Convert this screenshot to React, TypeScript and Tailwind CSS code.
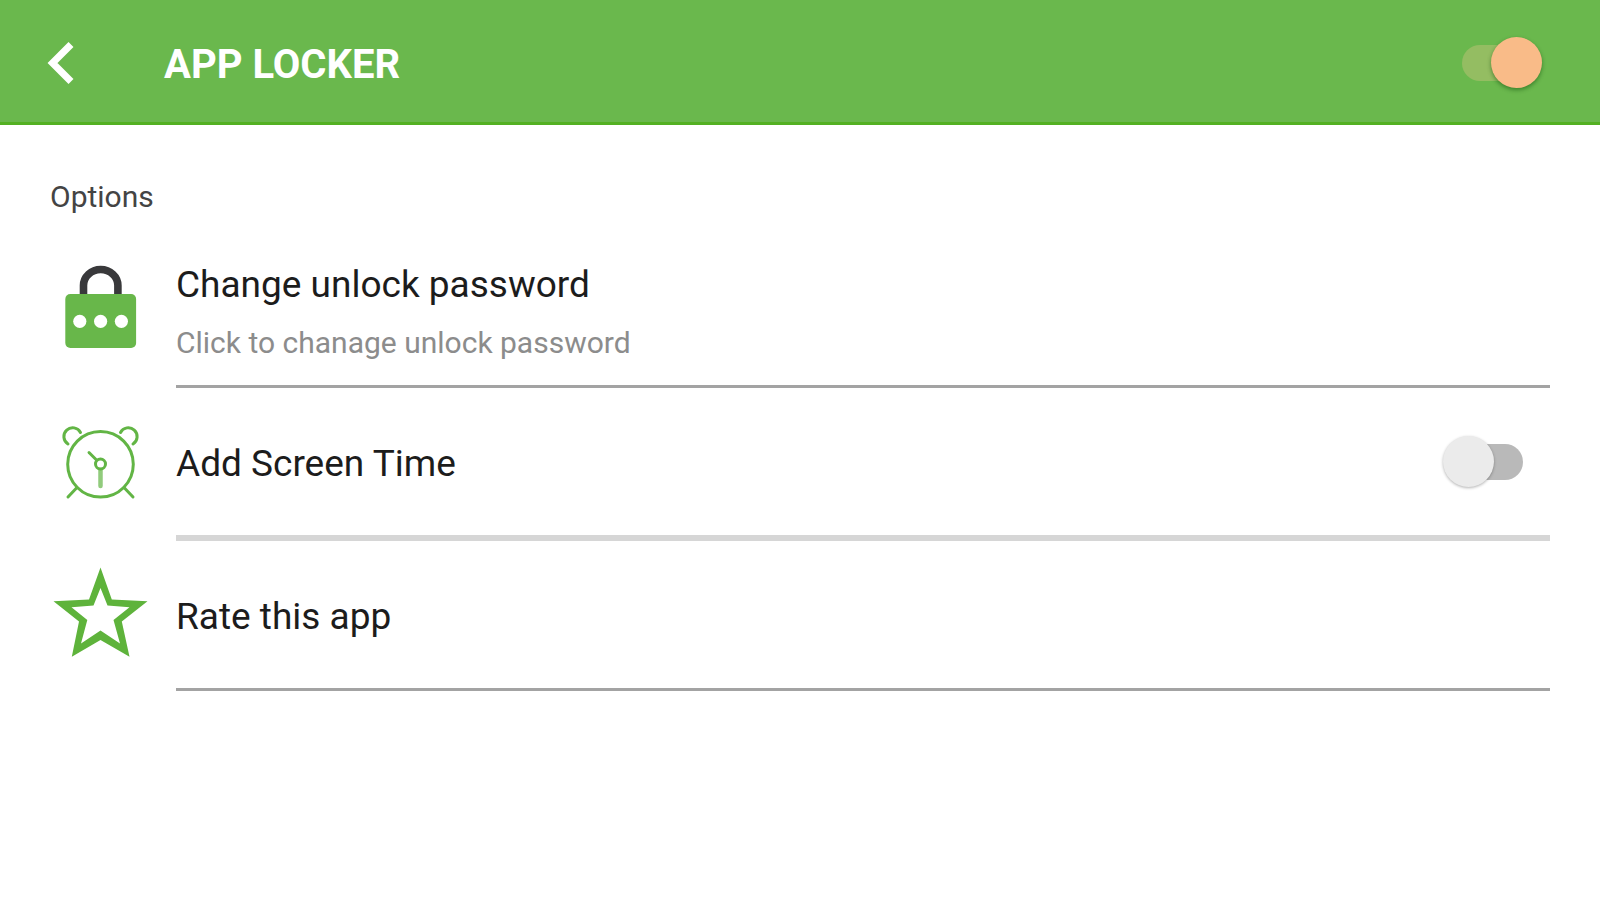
import clsx from "clsx";
import { useState } from "react";
import type { ReactNode } from "react";

function BackIcon() {
  return (
    <svg viewBox="0 0 28 44" className="w-7 h-11" fill="none" aria-hidden>
      <path d="M24 3.500 5.500 22 24 40.500" stroke="#fff" strokeWidth="7" />
    </svg>
  );
}

function LockIcon() {
  return (
    <svg viewBox="0 0 100 100" className="w-[100px] h-[100px]" aria-hidden>
      <path d="M33.5 41V30.5a17.2 16 0 0 1 34.4 0V41" fill="none" stroke="#39393b" strokeWidth="7.6" />
      <rect x="15.3" y="39" width="70.8" height="54" rx="5" fill="#68b74a" />
      <circle cx="29.8" cy="66.3" r="6.6" fill="#fff" />
      <circle cx="50.6" cy="66.3" r="6.6" fill="#fff" />
      <circle cx="71.4" cy="66.3" r="6.6" fill="#fff" />
    </svg>
  );
}

function AlarmIcon() {
  return (
    <svg
      viewBox="0 0 100 100"
      className="w-[100px] h-[100px]"
      fill="none"
      stroke="#62b545"
      strokeWidth="3"
      strokeLinecap="round"
      aria-hidden
    >
      <circle cx="50.5" cy="49.3" r="32.8" />
      <circle cx="50.5" cy="49" r="5" />
      <path d="M46.500 45 39 37.500" />
      <path d="M50.500 55V71" strokeWidth="4.500" strokeOpacity="0.7" />
      <path d="M18 29a8.800 8.800 0 1 1 12.500-11.500" />
      <path d="M83 29a8.800 8.800 0 1 0-12.500-11.500" />
      <path d="M27 72.500 18 82M74 72.500 83 82" />
    </svg>
  );
}

function StarIcon() {
  return (
    <svg viewBox="0 0 100 100" className="w-[100px] h-[100px]" aria-hidden>
      <path
        fillRule="evenodd"
        fill="#5eb33b"
        d="M50.500 1.500 61.800 33.500 97.500 35.300 71.800 55.500 79.500 90.700 50.500 74 21.800 90.700 29 55.500 3.500 35.300 39 33.500ZM50.500 22 43.500 39.500 21.500 41.300 37.300 54 31 77.500 50.500 64.500 70 77.500 63.500 54 79.500 41.300 57.500 39.500Z"
      />
    </svg>
  );
}

type SwitchProps = {
  id: string;
  label: string;
  checked: boolean;
  onChange: (checked: boolean) => void;
};

function Switch({ id, label, checked, onChange }: SwitchProps) {
  return (
    <label htmlFor={id} className="relative flex items-center w-20 h-[52px] shrink-0 cursor-pointer">
      <input
        id={id}
        type="checkbox"
        role="switch"
        aria-label={label}
        className="sr-only"
        checked={checked}
        onChange={(e) => onChange(e.target.checked)}
      />
      <span
        className={clsx(
          "h-9 w-16 rounded-full",
          checked ? "bg-[#94bd62]" : "ml-auto bg-[#b9b9b9]"
        )}
      />
      <span
        className={clsx(
          "absolute top-0 size-[51px] rounded-full",
          checked
            ? "right-0 bg-[#f9bb88] shadow-[0_2px_4px_rgba(0,60,0,0.45)]"
            : "left-0 bg-[#ebebeb] shadow-[0_1px_3px_rgba(0,0,0,0.3)]"
        )}
      />
    </label>
  );
}

type RowProps = {
  icon: ReactNode;
  thickDivider?: boolean;
  children: ReactNode;
};

function Row({ icon, thickDivider, children }: RowProps) {
  return (
    <li className="flex gap-[26px]">
      <div className="flex items-center shrink-0">{icon}</div>
      <div
        className={clsx(
          "box-content flex flex-1 items-center min-h-[147px]",
          thickDivider ? "border-b-6 border-[#d6d6d6]" : "border-b-3 border-[#a3a3a3]"
        )}
      >
        {children}
      </div>
    </li>
  );
}

export default function App() {
  const [enabled, setEnabled] = useState(true);
  const [screenTime, setScreenTime] = useState(false);

  return (
    <div className="min-h-screen bg-white font-['Roboto',sans-serif] text-[#1c1c1c]">
      <header className="flex items-center h-[125px] pt-1 pl-[47px] pr-[58px] bg-[#6ab84d] border-b-3 border-[#53b022]">
        <button type="button" aria-label="Back" className="cursor-pointer">
          <BackIcon />
        </button>
        <h1 className="ml-[89px] mr-auto pt-1 text-[40px] leading-[48px] font-bold text-white">APP LOCKER</h1>
        <Switch id="app-locker" label="App locker" checked={enabled} onChange={setEnabled} />
      </header>

      <main className="px-[50px] pt-[54px]">
        <h2 className="text-[30px] leading-9 text-[#444]">Options</h2>
        <ul className="mt-[6px]">
          <Row icon={<LockIcon />}>
            <button type="button" className="flex-1 pt-10 pb-6 text-left cursor-pointer">
              <span className="block text-[37px] leading-[48px]">Change unlock password</span>
              <span className="block mt-4 text-[30px] leading-9 text-[#8c8c8c]">
                Click to chanage unlock password
              </span>
            </button>
          </Row>
          <Row icon={<AlarmIcon />} thickDivider>
            <span className="flex-1 pt-1 text-[37px] leading-[48px]">Add Screen Time</span>
            <div className="pr-[27px]">
              <Switch id="screen-time" label="Add Screen Time" checked={screenTime} onChange={setScreenTime} />
            </div>
          </Row>
          <Row icon={<StarIcon />}>
            <button type="button" className="flex-1 pt-1 text-left text-[37px] leading-[48px] cursor-pointer">
              Rate this app
            </button>
          </Row>
        </ul>
      </main>
    </div>
  );
}
